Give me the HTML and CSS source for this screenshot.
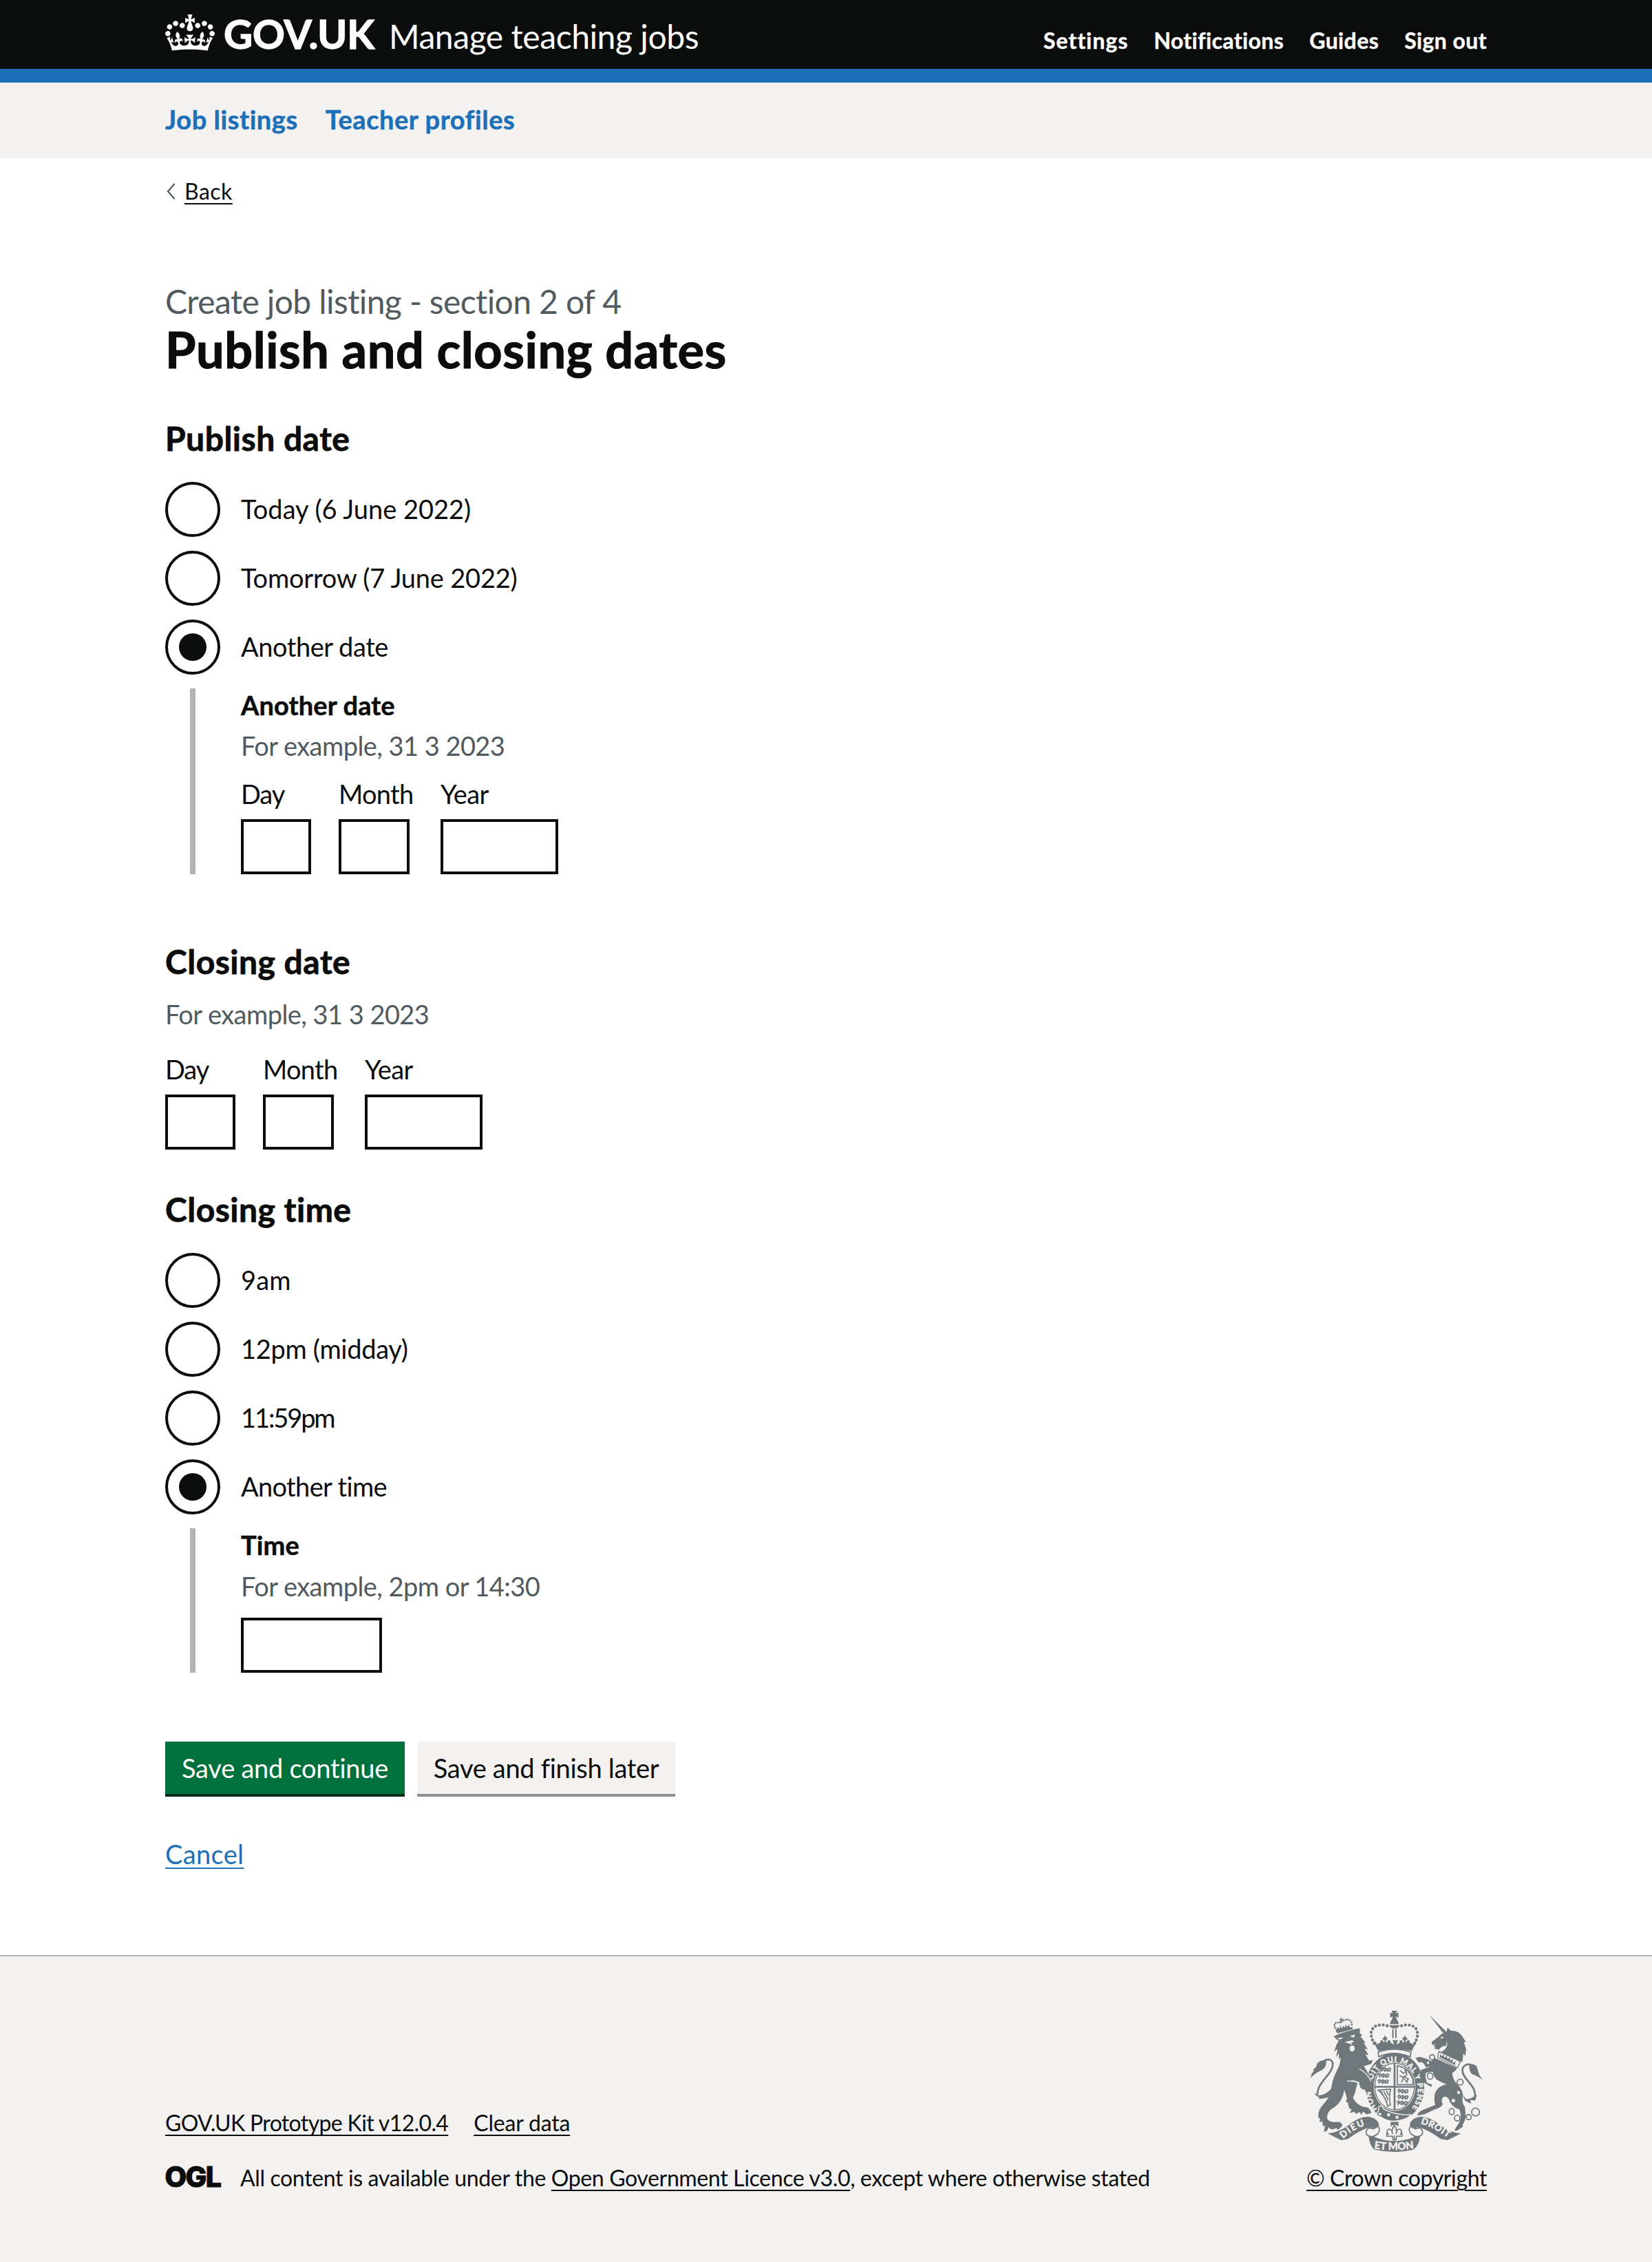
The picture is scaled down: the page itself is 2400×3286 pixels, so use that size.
FILE: index.html
```html
<!DOCTYPE html>
<html lang="en">
<head>
<meta charset="utf-8">
<title>Publish and closing dates - Manage teaching jobs</title>
<link rel="stylesheet" href="styles.css">
</head>
<body>
<header class="header">
  <div class="container header-inner">
    <svg class="crown" viewBox="0 0 132 97" width="72" height="53" aria-hidden="true"><path fill="#fff" d="M25 30.2c3.5 1.5 7.7-.2 9.1-3.7 1.5-3.6-.2-7.8-3.9-9.2-3.6-1.4-7.6.3-9.1 3.9-1.4 3.5.3 7.5 3.9 9zM9 39.5c3.6 1.5 7.8-.2 9.2-3.7 1.5-3.6-.2-7.8-3.9-9.1-3.6-1.5-7.6.2-9.1 3.8-1.4 3.5.3 7.5 3.8 9zM4.4 57.2c3.5 1.5 7.7-.2 9.1-3.8 1.5-3.6-.2-7.7-3.9-9.1-3.5-1.5-7.6.3-9.1 3.8-1.4 3.5.3 7.6 3.9 9.1zm38.3-21.4c3.5 1.5 7.7-.2 9.1-3.8 1.5-3.6-.2-7.7-3.9-9.1-3.6-1.5-7.6.3-9.1 3.8-1.3 3.6.4 7.7 3.9 9.1zm64.4-5.6c-3.6 1.5-7.8-.2-9.1-3.7-1.5-3.6.2-7.8 3.8-9.2 3.6-1.4 7.7.3 9.2 3.9 1.3 3.5-.4 7.5-3.9 9zm15.9 9.3c-3.6 1.5-7.7-.2-9.1-3.7-1.5-3.6.2-7.8 3.7-9.1 3.6-1.5 7.7.2 9.2 3.8 1.5 3.5-.3 7.5-3.8 9zm4.7 17.7c-3.6 1.5-7.8-.2-9.2-3.8-1.5-3.6.2-7.7 3.9-9.1 3.6-1.5 7.7.3 9.2 3.8 1.3 3.5-.4 7.6-3.9 9.1zM89.3 35.8c-3.6 1.5-7.8-.2-9.2-3.8-1.4-3.6.2-7.7 3.9-9.1 3.6-1.5 7.7.3 9.2 3.8 1.4 3.6-.3 7.7-3.9 9.1zM69.7 17.7l8.9 4.7V9.3l-8.9 2.8c-.2-.3-.5-.6-.9-.9L72.4 0H59.6l3.5 11.2c-.3.3-.6.5-.9.9l-8.8-2.8v13.1l8.8-4.7c.3.3.6.7.9.9l-5 15.4v.1c-.2.8-.4 1.6-.4 2.4 0 4.1 3.1 7.5 7 8.1h.2c.3 0 .7.1 1 .1.4 0 .7 0 1-.1h.2c4-.6 7.1-4.1 7.1-8.1 0-.8-.1-1.7-.4-2.4V34l-5.1-15.4c.4-.2.7-.6 1-.9zM66 92.8c16.9 0 32.8 1.1 47.1 3.2 4-16.9 8.9-26.7 14-33.5l-9.6-3.4c1 4.9 1.1 7.2 0 10.2-1.5-1.4-3-4.3-4.2-8.7L108.6 76c2.8-2 5-3.2 7.5-3.3-4.4 9.4-10 11.9-13.6 11.2-4.3-.8-6.3-4.6-5.6-7.9 1-4.7 5.7-5.9 8-.5 4.3-8.7-3-11.4-7.6-8.8 7.1-7.2 7.9-13.5 2.1-21.1-8 6.1-8.1 12.3-4.5 20.8-4.7-5.4-12.1-2.5-9.5 6.2 3.4-5.2 7.9-2 7.2 3.1-.6 4.3-6.4 7.8-13.5 7.2-10.3-.9-10.9-8-11.2-13.8 2.5-.5 7.1 1.8 11 7.3L80.2 60c-4.1 4.4-8 5.3-12.3 5.4 1.4-4.4 8-11.6 8-11.6H55.5s6.4 7.2 7.9 11.6c-4.2-.1-8-1-12.3-5.4l1.4 16.4c3.9-5.5 8.5-7.7 10.9-7.3-.3 5.8-.9 12.8-11.1 13.8-7.2.6-12.9-2.9-13.5-7.2-.7-5 3.8-8.3 7.1-3.1 2.7-8.7-4.6-11.6-9.4-6.2 3.7-8.5 3.6-14.7-4.6-20.8-5.8 7.6-5 13.9 2.2 21.1-4.7-2.6-11.9.1-7.7 8.8 2.3-5.5 7.1-4.2 8.1.5.7 3.3-1.3 7.1-5.7 7.9-3.5.7-9-1.8-13.5-11.2 2.5.1 4.7 1.3 7.5 3.3l-4.7-15.4c-1.2 4.4-2.7 7.2-4.3 8.7-1.1-3-.9-5.3 0-10.2l-9.5 3.4c5 6.9 9.9 16.7 14 33.5 14.8-2.1 30.8-3.2 47.7-3.2z"/></svg>
    <span class="logotype">GOV.UK</span>
    <span class="product">Manage teaching jobs</span>
    <nav class="account">
      <a class="settings">Settings</a><a>Notifications</a><a>Guides</a><a>Sign out</a>
    </nav>
  </div>
</header>
<div class="service-nav">
  <nav class="container service-nav-inner"><a>Job listings</a><a>Teacher profiles</a></nav>
</div>

<main class="container">
  <a class="back"><svg width="15" height="24" viewBox="0 0 15 24" aria-hidden="true"><path d="M13.5 1L4 12l9.5 11" fill="none" stroke="#505a5f" stroke-width="2.2"/></svg><span class="link">Back</span></a>
  <p class="caption">Create job listing - section 2 of 4</p>
  <h1>Publish and closing dates</h1>

  <section>
    <h2>Publish date</h2>
    <div class="radios">
      <label class="radio"><i class="dot"></i><span class="t-today">Today (6 June 2022)</span></label>
      <label class="radio"><i class="dot"></i><span class="t-tomorrow">Tomorrow (7 June 2022)</span></label>
      <label class="radio"><i class="dot checked"></i><span>Another date</span></label>
    </div>
    <div class="conditional">
      <h3>Another date</h3>
      <p class="hint">For example, 31 3 2023</p>
      <div class="date">
        <label class="field"><span class="t-day">Day</span><i class="input w2"></i></label>
        <label class="field month"><span>Month</span><i class="input w2m"></i></label>
        <label class="field"><span>Year</span><i class="input w4"></i></label>
      </div>
    </div>
  </section>

  <section class="closing-date">
    <h2>Closing date</h2>
    <p class="hint">For example, 31 3 2023</p>
    <div class="date">
      <label class="field"><span class="t-day">Day</span><i class="input w2"></i></label>
      <label class="field month"><span>Month</span><i class="input w2m"></i></label>
      <label class="field"><span>Year</span><i class="input w4"></i></label>
    </div>
  </section>

  <section class="closing-time">
    <h2>Closing time</h2>
    <div class="radios">
      <label class="radio"><i class="dot"></i><span class="t-nine">9am</span></label>
      <label class="radio"><i class="dot"></i><span class="t-midday">12pm (midday)</span></label>
      <label class="radio"><i class="dot"></i><span class="t-midnight">11:59pm</span></label>
      <label class="radio"><i class="dot checked"></i><span class="t-time">Another time</span></label>
    </div>
    <div class="conditional time">
      <h3>Time</h3>
      <p class="hint">For example, 2pm or 14:30</p>
      <i class="input w5"></i>
    </div>
  </section>

  <div class="buttons">
    <button class="button">Save and continue</button>
    <button class="button secondary">Save and finish later</button>
  </div>
  <a class="cancel link">Cancel</a>
</main>

<footer class="footer">
  <div class="container footer-inner">
    <div>
      <div class="footer-links"><a class="link kit">GOV.UK Prototype Kit v12.0.4</a><a class="link">Clear data</a></div>
      <div class="licence">
        <svg class="ogl" width="82" height="33" viewBox="0 0 82 33" aria-label="OGL"><text x="-0.5" y="30.8" textLength="81" lengthAdjust="spacingAndGlyphs">OGL</text></svg>
        <p>All content is available under the <a class="link">Open Government Licence v3.0</a>, except where otherwise stated</p>
      </div>
    </div>
    <div class="copyright">
      <svg class="crest" width="250" height="205" viewBox="72 65 750 613" preserveAspectRatio="none" aria-hidden="true">
        <defs>
          <path id="garter" d="M363 492 A102 121 0 1 1 503 501"/>
          <path id="dieu" d="M213 621 Q262 575 325 558"/>
          <path id="droit" d="M551 555 Q612 573 675 620"/>
          <path id="mon" d="M349 664 Q437 677 528 662"/>
          <path id="leopard" d="M0 8l8-6 7 5 9-4 8 6 9-5 8 4M4 14l9-3 8 6 9-5 9 5 8-4M8 8l-2 12M22 6l3 14M36 8l-3 12M46 6l-2 13"/>
        </defs>
        <!-- royal crown -->
        <path d="M425 65h24l-5 12 11-4v22l-12-5 5 14h-22l5-14-12 5V73l11 4zM418 123q4-24 19-24t19 24zM415 128h45q-3 14-22 14t-23-14zM428 144h6v40h-6zM441 144h6v40h-6z"/>
        <g fill="none" stroke="#6f777b" stroke-width="13" stroke-linecap="round" stroke-dasharray="0 17">
          <path d="M349 207C324 165 336 129 375 127C395 125 410 130 420 138"/><path d="M525 207C550 165 538 129 499 127C479 125 464 130 456 138"/>
        </g>
        <path d="M344 195q18 6 17 18 6-10 15-8-3-9 4-12 10-1 10 11 7-5 3-11-11-2-5-11 7 1 7-13 6 13 9 12 7 9-4 12-2 8 6 12 0-15 12-11 6 6 1 11 8-2 15 8 1-14-6-20h26q-7 6-6 20 6-10 14-8-5-6 0-11 12-4 12 11 7-4 5-12-12-4-4-12 5 1 9-12 2 14 8 13 6 9-5 11-4 6 3 11 0-12 10-11 7 3 4 12 8-2 14 8 0-12 17-18l-22 45q-75-18-146 0z"/>
        <path d="M366 245q71-26 144 0-3 8-3 20-70-30-138 0z" fill="#f3f2f1" stroke="#6f777b" stroke-width="5"/>
        <!-- garter and shield -->
        <ellipse cx="440" cy="397" rx="127" ry="148"/>
        <ellipse cx="438" cy="394" rx="91" ry="106" fill="#f3f2f1"/>
        <ellipse cx="438" cy="394" rx="86" ry="101" fill="none" stroke="#6f777b" stroke-width="4"/>
        <path d="M434 292h8v202h-8zM350 392h177v7H350z"/>
        <g fill="none" stroke="#6f777b" stroke-width="5">
          <use href="#leopard" x="374" y="310"/><use href="#leopard" x="366" y="336"/><use href="#leopard" x="364" y="362"/>
          <use href="#leopard" x="450" y="404"/><use href="#leopard" x="450" y="430"/><use href="#leopard" x="447" y="455"/>
          <path d="M450 304q48 8 68 58v24h-68zM462 325l14 12 12-8 4 14-12 8 18 10-8 14M460 348l18 6-10 22M480 322l8 4M480 360l14 18"/>
          <path d="M366 410l54-4q-8 40 0 68l-12 6q-10-45-42-70zM378 414l28 50M390 414l20 38M402 412l10 20"/>
        </g>
        <text class="crest-light" font-size="33"><textPath href="#garter" textLength="525">HONI SOIT QUI MAL Y PENSE</textPath></text>
        <!-- buckle -->
        <path d="M368 484q14-14 22 8 60 30 120 24l-12 12q-70 34-120-2-22-2-16-20 10-4 6-22z" stroke="#f3f2f1" stroke-width="4"/>
        <circle cx="412" cy="517" r="7" fill="#f3f2f1"/><circle cx="449" cy="528" r="7" fill="#f3f2f1"/><circle cx="374" cy="514" r="6" fill="#f3f2f1"/>
        <!-- lion -->
        <g transform="translate(45 45)">
          <path d="M138 106L208 90l3 10-68 19zM133 84l8 18 4-12 8 9 3-15 8 14 5-14 8 10 4-16 6 13 8-13 3 17-60 16z"/>
          <path d="M132 92Q126 66 158 72M162 68Q196 46 207 74L206 88" fill="none" stroke="#6f777b" stroke-width="8" stroke-linecap="round" stroke-dasharray="0 10"/>
          <path d="M158 50l8 6-3 14-6-2zM152 58l18-4v5l-17 4z"/>
          <path d="M137 142l-9-11q40-20 109-35l6 3-2 19 11 7-7 7 23 29-11-3 20 31-15-5 18 29-14-4 16 28 17-3-8 17-32 10Q290 308 299 345l0 30-14-8-14 12-9-17q-22 2-24-34l-40-2q-6-6-16 0l52 6q-9 16-12 40-6 16-10 26 14 30 46 40 28-2 34 27l-22 5-13-12-10 14-5-12-18 8-7-9-20 6 9-16Q192 448 190 420l-10-6 6-12-12-38Q165 422 119 446q-24 18-19 45 12 16 40 12 22-2 26 16l-20 20-6-10q-26 14-33-4l-10 18-12 2 5-26-10 2-2-20-12 3 2-16-7-4Q58 452 80 430q33-38 36-64 3-40 25-86 18-30 16-58l-7 9v-26l-13 18q6-22 8-36l-14 10q6-30 19-46z"/>
          <path d="M28 312q2-14 4-20 12-6 6-17 14-6 17-25 12-18 39-13 6 24-17 41-32 12-49 34zM43 377l17 11q30 2 60-32l-2 32q-22 17-58 14l6-7q-18-4-23-18z"/>
          <path d="M84 238Q118 222 124 250C124 300 55 326 57 386" fill="none" stroke="#6f777b" stroke-width="8"/>
          <path d="M141 139l28-3q-12 12-18 7zM198 131l22-8q0 15-10 13zM177 156l32-8 8 7-14 3 8 9-20-6z" fill="#f3f2f1"/>
          <ellipse cx="208" cy="184" rx="11" ry="13" fill="#f3f2f1"/>
          <path d="M240 272q38 24 50 54M197 327q20-8 36 8" fill="none" stroke="#f3f2f1" stroke-width="4"/>
        </g>
        <!-- unicorn -->
        <g transform="translate(450 45)">
          <path d="M138 37l74 73-9 11z"/>
          <path d="M205 116l10-6 4-17 14 14q34-4 54 30l12 18-9 2 10 30-4 30-8-12-4 34-12 6-90-44q28-6 32-28-20-2-32 16l-20-4 4-8-10-1 12-9-15 2-4-13 30-22q12-14 25-18z"/>
          <path d="M188 136q8-6 14 0l-8 6zM214 150q6 24-18 40 20-4 22-26z" fill="#f3f2f1"/>
          <path d="M181 197l94 43-13 28-86-44z" fill="#f3f2f1" stroke="#6f777b" stroke-width="4"/>
          <path d="M184 222l4-16 6 12 8-8 4 16 8-12 6 17 9-11 2 18 10-10 0 20 12-10-1 18z"/>
          <path d="M162 225l96 43q4 8-18 22-2 25 22 50 28 30 23 55-5 28 10 43l3 42q-2 20-14 35l3 7-25 18h-14l12-20q20-25 16-50l-4-20q-37-10-50-50-12-10-22-5-12 15-2 30-3 15-38 25l-42 20-32 5q4-13 22-23l57-22q-7-30 0-55 15-30 50-35-25-10-45-22-15-18-15-33l-30 5-3 15 8 28 22 8-4 10-40-24-10-26 6-24q24-10 45-13l-25 1-7-13q-12-14-23-6l-15-21 20-5q25 5 50 20z"/>
          <path d="M314 254q32-8 36 21l8 25 14 20q-27-20-47-25-14-15-11-41zM284 384l16 20q20 0 47-20l-7 26-22-3 4 17-26-12z"/>
          <path d="M334 262C305 242 280 260 284 285C292 325 348 345 338 402" fill="none" stroke="#6f777b" stroke-width="8"/>
          <g fill="#f3f2f1" stroke="#6f777b" stroke-width="5"><circle cx="152" cy="222" r="11"/><circle cx="134" cy="246" r="8"/><ellipse cx="143" cy="304" rx="12" ry="14"/><circle cx="274" cy="330" r="13"/><circle cx="267" cy="375" r="9"/><circle cx="244" cy="410" r="10"/></g>
          <g fill="none" stroke="#6f777b" stroke-width="5"><ellipse cx="237" cy="458" rx="11" ry="14"/><ellipse cx="261" cy="486" rx="12" ry="13"/><circle cx="311" cy="482" r="11"/><circle cx="341" cy="460" r="17"/></g>
        </g>
        <!-- motto scroll -->
        <path d="M147 598q50-4 93-38 50-40 90-34 36 8 40 34-10 26-22 20-10-14-28-6-40 14-85 48l-30 5z"/>
        <path d="M727 598q-50-4-93-38-50-40-90-34-36 8-40 34 10 26 22 20 10-14 28-6 40 14 85 48l30 5z"/>
        <path d="M324 600q113 62 226 0-2 50-30 68-83 20-170 0-22-16-26-68z"/>
        <path d="M330 572q-22 12-14 30 20 22 50-4 12-18 0-32-24 20-36 6zM544 572q22 12 14 30-20 22-50-4-12-18 0-32 24 20 36 6z" fill="#f3f2f1" stroke="#6f777b" stroke-width="5"/>
        <g class="crest-light" font-size="40"><text><textPath href="#dieu" textLength="112">DIEU</textPath></text><text><textPath href="#droit" textLength="135">DROIT</textPath></text><text font-size="45"><textPath href="#mon" textLength="174">ET MON</textPath></text></g>
        <path d="M421 548h34v20q-17-14-34 0z"/>
        <path d="M437 564q-16 18-7 36-4-24-20-20-10 12 2 22l-8-4v12h24l4 16h12l4-16h22v-12l-8 4q12-10 2-22-18-4-20 20 8-18-7-36zM437 606v18" fill="#f3f2f1" stroke="#6f777b" stroke-width="5"/>
      </svg>
      <a class="link">© Crown copyright</a>
    </div>
  </div>
</footer>
</body>
</html>
```
FILE: styles.css
```css
* { box-sizing: border-box; }
body {
  margin: 0;
  background: #fff;
  color: #0b0c0c;
  font-family: Lato, "Liberation Sans", sans-serif;
  font-size: 38px;
  line-height: 50px;
  letter-spacing: -0.45px;
  font-variant-ligatures: none;
}
h1, h2, h3, p { margin: 0; }
.container { width: 1920px; margin: 0 auto; }
.link {
  text-decoration: underline;
  text-decoration-thickness: 2px;
  text-underline-offset: 5px;
}

/* header */
.header { height: 120px; background: #0b0c0c; border-bottom: 20px solid #1d70b8; color: #fff; }
.header-inner { display: flex; align-items: baseline; padding-top: 20px; }
.crown { align-self: flex-start; margin: 1px 12px 0 0; }
.logotype { width: 241px; padding-left: 1px; font-size: 58px; line-height: 58px; font-weight: 700; letter-spacing: -0.1px; -webkit-text-stroke: 1.4px #fff; }
.product { font-size: 48px; line-height: 58px; letter-spacing: -0.42px; }
.account { display: flex; gap: 37px; margin-left: auto; font-size: 32px; line-height: 40px; font-weight: 700; letter-spacing: 0.4px; -webkit-text-stroke: 0.4px #fff; }
.settings { letter-spacing: 1px; }

.service-nav { height: 110px; padding-top: 28px; background: #f3f2f1; }
.service-nav-inner { display: flex; gap: 40px; color: #1d70b8; font-weight: 700; letter-spacing: 0.55px; -webkit-text-stroke: 0.5px #1d70b8; }

/* page heading */
.back { display: flex; width: max-content; align-items: center; gap: 13px; padding-top: 28px; font-size: 32px; line-height: 40px; letter-spacing: 0.5px; }
.caption { margin-top: 110px; color: #505a5f; font-size: 48px; line-height: 60px; letter-spacing: -0.6px; }
h1 { margin-bottom: 60px; margin-top: -1px; font-size: 72px; line-height: 80px; letter-spacing: 0.6px; -webkit-text-stroke: 1.2px #0b0c0c; }
h2 { font-size: 48px; line-height: 60px; letter-spacing: 0.5px; -webkit-text-stroke: 0.8px #0b0c0c; }
h3 { font-size: 38px; line-height: 50px; letter-spacing: 0.1px; -webkit-text-stroke: 0.5px #0b0c0c; }

/* radios */
.radios { display: flex; flex-direction: column; gap: 20px; padding-top: 33px; }
.radio { display: flex; align-items: center; gap: 30px; height: 80px; }
.radio span { padding-bottom: 2px; }
.dot { display: grid; place-items: center; width: 80px; height: 80px; border: 4px solid #0b0c0c; border-radius: 50%; }
.checked::after { content: ""; width: 40px; height: 40px; border-radius: 50%; background: #0b0c0c; }
.t-today { letter-spacing: 0; }
.t-tomorrow { letter-spacing: -0.2px; }
.t-nine { letter-spacing: 0.2px; }
.t-midday { letter-spacing: -0.3px; }
.t-midnight { letter-spacing: -2.1px; }
.t-time { letter-spacing: -0.65px; }
.conditional { height: 270px; margin: 20px 0 0 36px; padding-left: 66px; border-left: 8px solid #b1b4b6; display: flow-root; }
.conditional h3 { margin-top: -1px; }
.conditional .hint { margin-top: 9px; }
.conditional .date { margin-top: 20px; }
.hint { color: #505a5f; letter-spacing: -0.55px; }

/* fields */
.date { display: flex; gap: 40px; }
.field { display: flex; flex-direction: column; gap: 12px; letter-spacing: -0.7px; }
.month { width: 108px; }
.t-day { letter-spacing: -1.1px; }
.input { display: block; height: 80px; border: 4px solid #0b0c0c; }
.w2 { width: 102px; }
.w2m { width: 103px; }
.w4 { width: 171px; }
.w5 { width: 205px; margin-top: 21px; }
.closing-date { margin-top: 97px; }
.closing-date .hint { margin-top: 21px; }
.closing-date .date { margin-top: 30px; }
.closing-time { margin-top: 57px; }
.time { height: 210px; }
.time .hint { margin-top: 10px; letter-spacing: -0.55px; }

/* actions */
.buttons { display: flex; gap: 18px; margin-top: 100px; }
.button {
  width: 348px; height: 76px; padding: 0; border: 0;
  background: #00703c; box-shadow: 0 4px 0 #002d18; color: #fff;
  font: inherit; line-height: 74px; letter-spacing: -0.25px; font-variant-ligatures: none;
}
.secondary { width: 375px; background: #f3f2f1; box-shadow: 0 4px 0 #929191; color: #0b0c0c; letter-spacing: -0.3px; }
.cancel { display: block; width: max-content; margin-top: 62px; color: #1d70b8; letter-spacing: 0.35px; }

/* footer */
.footer { height: 446px; margin-top: 122px; padding-bottom: 102px; border-top: 2px solid #b1b4b6; background: #f3f2f1; font-size: 32px; line-height: 40px; }
.footer-inner { display: flex; justify-content: space-between; align-items: flex-end; height: 100%; }
.footer-links { display: flex; gap: 37px; margin-bottom: 40px; letter-spacing: -0.2px; }
.kit { letter-spacing: -0.64px; }
.licence { display: flex; gap: 27px; letter-spacing: -0.36px; }
.ogl { margin-top: 2px; overflow: visible; }
.ogl text { font: 800 41px Inter, sans-serif; letter-spacing: -1.5px; fill: #0b0c0c; stroke: #0b0c0c; stroke-width: 1.2px; }
.copyright { display: flex; flex-direction: column; align-items: center; gap: 18px; letter-spacing: -0.38px; }
.crest { fill: #6f777b; }
.crest-light { fill: #f3f2f1; stroke: #f3f2f1; stroke-width: 1.5px; font-family: Lato, sans-serif; font-weight: 700; letter-spacing: 0; }
```
